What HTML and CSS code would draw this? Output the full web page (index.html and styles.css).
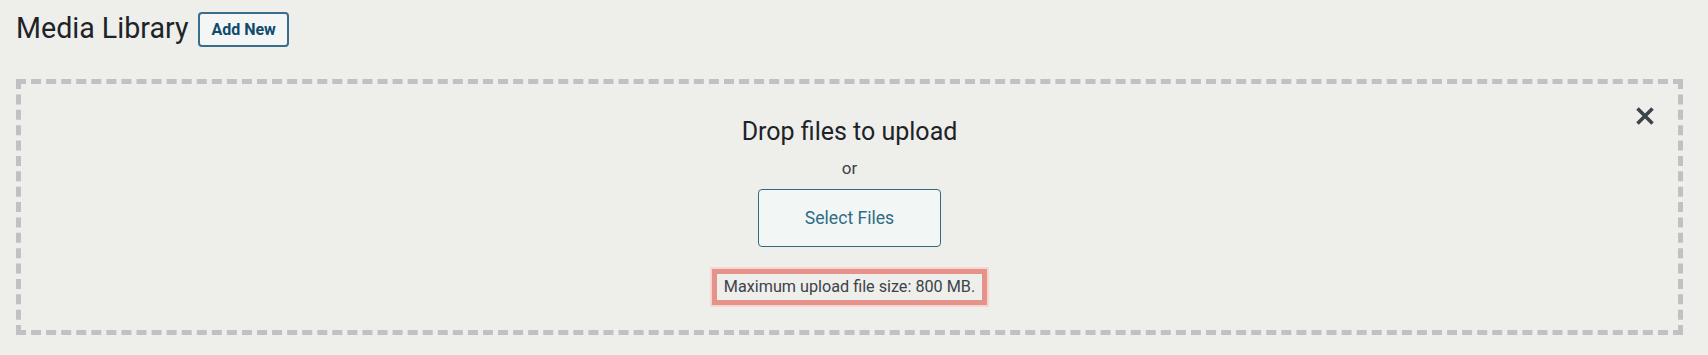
FILE: index.html
```html
<!DOCTYPE html>
<html lang="en">

<head>
    <meta charset="UTF-8">
    <meta name="viewport" content="width=device-width, initial-scale=1.0">
    <title>Media Library</title>

    <link rel="stylesheet" href="styles.css">
</head>

<body>
    <div class="wrap">
        <div class="pageHead">
            <h1 class="pageTitle">Media Library</h1>
            <a class="addNew" href="#">Add New</a>
        </div>

        <div class="uploader">
            <button class="closeBtn" type="button" aria-label="Close uploader">
                <svg width="20" height="20" viewBox="0 0 20 20">
                    <path d="M2.5 2.5 L17.5 17.5 M17.5 2.5 L2.5 17.5" stroke="#3c434a" stroke-width="3.6" fill="none" />
                </svg>
            </button>

            <p class="dropInfo">Drop files to upload</p>
            <p class="orText">or</p>
            <button class="selectBtn" type="button">Select Files</button>
            <p class="maxSize">Maximum upload file size: 800 MB.</p>
        </div>
    </div>
</body>

</html>
```

FILE: styles.css
```css
*{
    margin: 0;
    padding: 0;
    box-sizing: border-box;
}

body{
    background-color: #eeeeeb;
    font-family: Roboto, "Liberation Sans", sans-serif;
    color: #1d2327;
}

.wrap{
    padding: 11px 25px 0 16px;
}

.pageHead{
    display: flex;
    align-items: flex-start;
    gap: 10px;
}

.pageTitle{
    font-size: 28.6px;
    font-weight: 400;
    line-height: 34px;
    color: #1d2327;
}

.addNew{
    margin-top: 1px;
    height: 35px;
    padding: 6px 11px;
    border: 2px solid #3a6d8c;
    border-radius: 4px;
    background-color: #f4f6f6;
    color: #0f4a6c;
    font-size: 16px;
    font-weight: 700;
    line-height: 19px;
    text-decoration: none;
}

.uploader{
    position: relative;
    margin-top: 32px;
    height: 256px;
    border: 5px dashed #c0c1c2;
    display: flex;
    flex-direction: column;
    align-items: center;
    padding-top: 31px;
}

.closeBtn{
    position: absolute;
    top: 22px;
    right: 23px;
    width: 20px;
    height: 20px;
    border: none;
    background: none;
    display: flex;
}

.dropInfo{
    font-size: 25px;
    line-height: 34px;
    color: #1d2327;
}

.orText{
    margin-top: 8px;
    font-size: 17px;
    line-height: 22px;
    color: #3c434a;
}

.selectBtn{
    margin-top: 10px;
    height: 58px;
    padding: 0 46px;
    border: 1px solid #336a80;
    border-radius: 4px;
    background-color: #f2f6f5;
    color: #2f6c86;
    font-family: Roboto, "Liberation Sans", sans-serif;
    font-size: 17.6px;
}

.maxSize{
    margin-top: 22px;
    padding: 3px 7px;
    border: 5px solid #e5928a;
    box-shadow: 0 0 0 2px #f7d6d1;
    font-size: 16.2px;
    line-height: 20px;
    color: #3c434a;
}
```
